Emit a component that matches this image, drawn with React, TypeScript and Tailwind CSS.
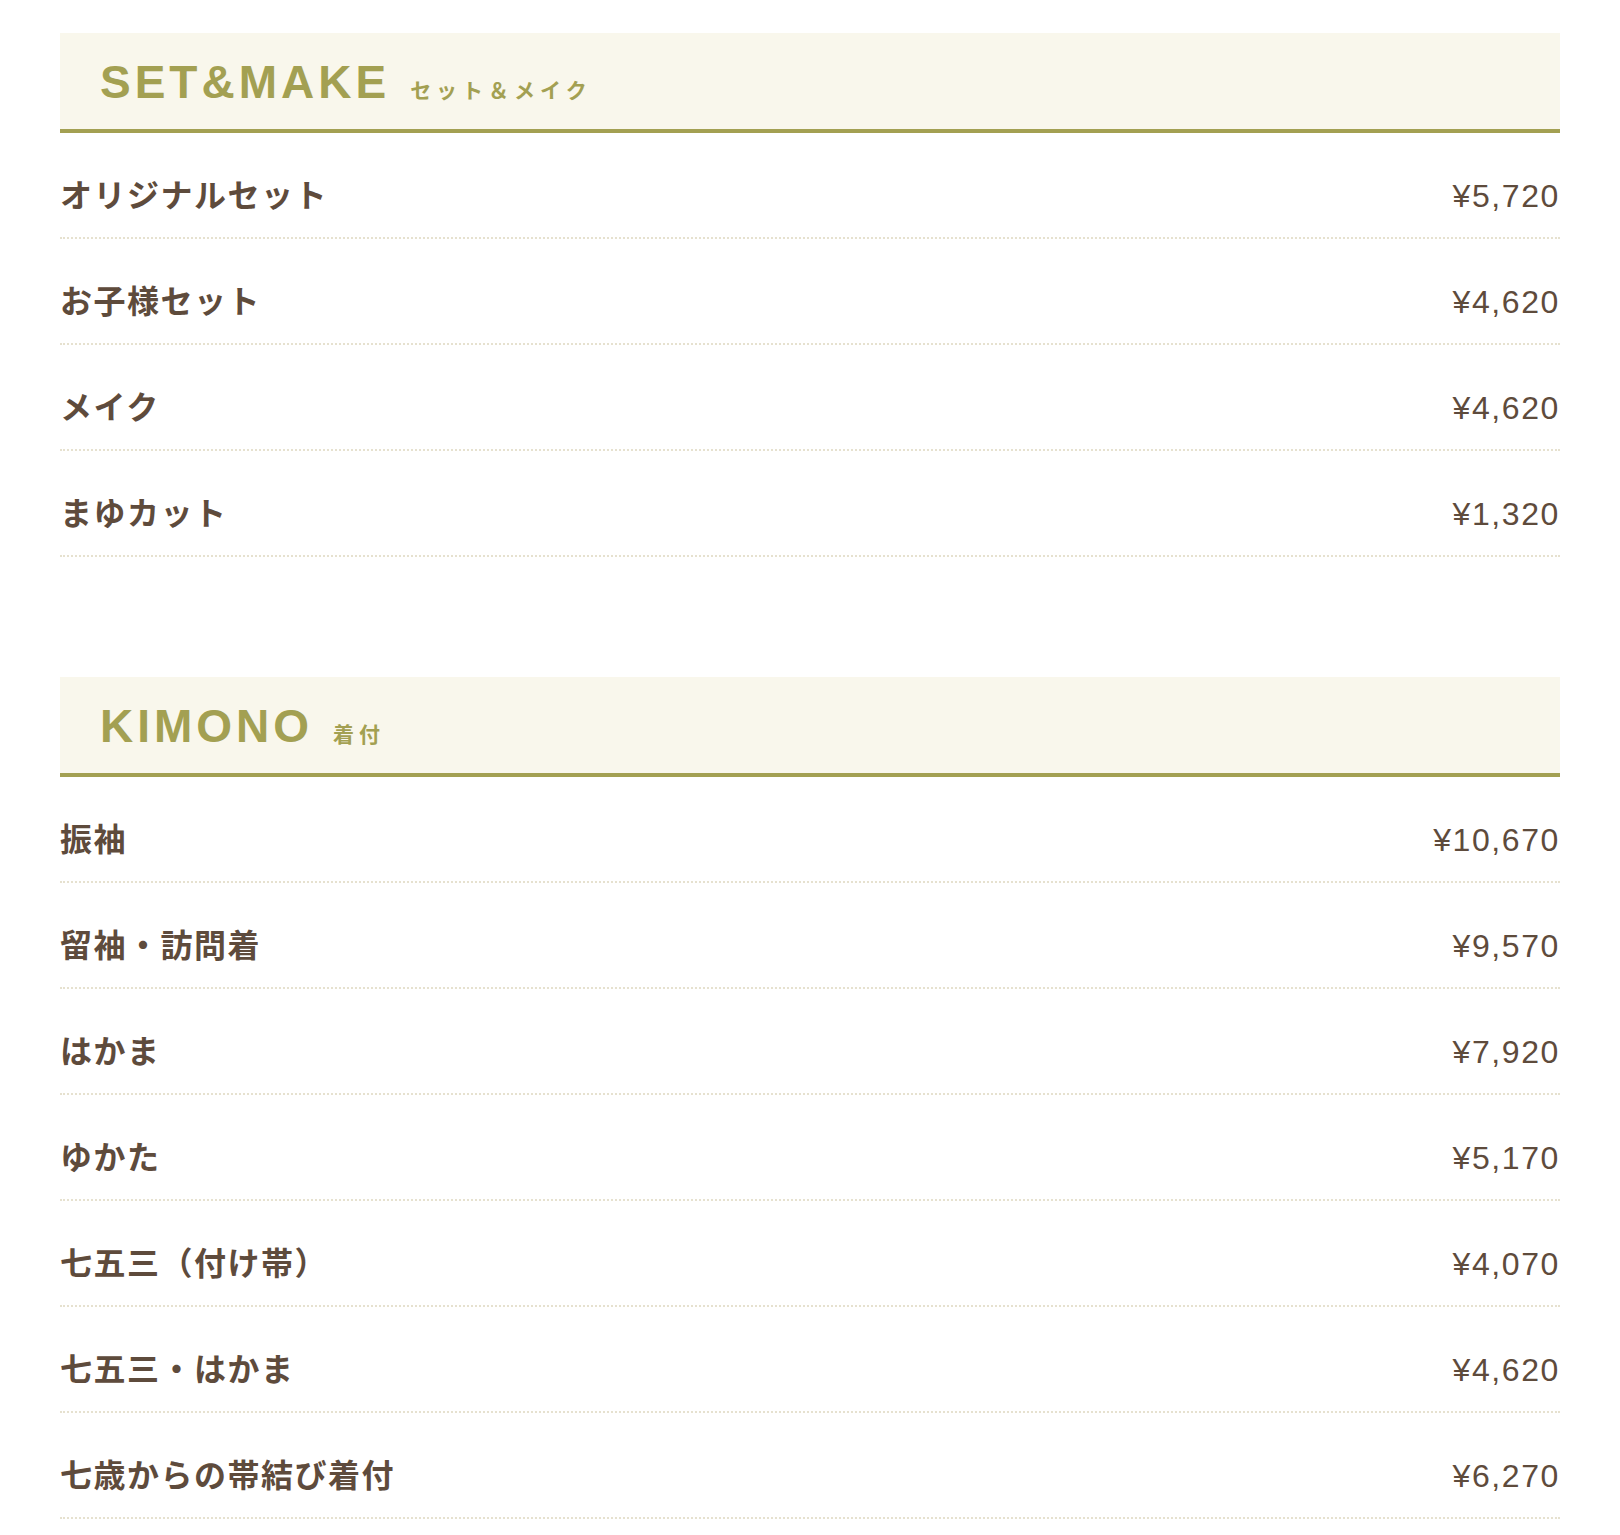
type MenuItem = { name: string; price: string };

type MenuSection = { en: string; ja: string; items: MenuItem[] };

const SECTIONS: MenuSection[] = [
  {
    en: 'SET&MAKE',
    ja: 'セット＆メイク',
    items: [
      { name: 'オリジナルセット', price: '¥5,720' },
      { name: 'お子様セット', price: '¥4,620' },
      { name: 'メイク', price: '¥4,620' },
      { name: 'まゆカット', price: '¥1,320' },
    ],
  },
  {
    en: 'KIMONO',
    ja: '着付',
    items: [
      { name: '振袖', price: '¥10,670' },
      { name: '留袖・訪問着', price: '¥9,570' },
      { name: 'はかま', price: '¥7,920' },
      { name: 'ゆかた', price: '¥5,170' },
      { name: '七五三（付け帯）', price: '¥4,070' },
      { name: '七五三・はかま', price: '¥4,620' },
      { name: '七歳からの帯結び着付', price: '¥6,270' },
    ],
  },
];

function SectionHeader({ en, ja }: { en: string; ja: string }) {
  return (
    <div className="h-[100px] bg-[#f9f7ec] border-b-4 border-[#a3a052] pl-[40px] pt-[26px]">
      <div className="flex items-baseline text-[#a3a052]">
        <h2 className="font-['Liberation_Sans',Arial,sans-serif] font-bold text-[46px] leading-[46px] tracking-[4px]">
          {en}
        </h2>
        <span className="ml-5 font-['Noto_Sans_CJK_JP',sans-serif] font-semibold text-[21px] leading-[21px] tracking-[5px]">
          {ja}
        </span>
      </div>
    </div>
  );
}

function PriceRow({ item }: { item: MenuItem }) {
  return (
    <li className="flex items-baseline justify-between pt-[36px] pb-[17px] border-b-2 border-dotted border-[#e6e1cf] text-[#5e4b3c]">
      <span className="font-['Noto_Sans_CJK_JP',sans-serif] font-bold text-[32px] leading-[48px] tracking-[1.5px]">
        {item.name}
      </span>
      <span className="font-['Liberation_Sans','Noto_Sans_CJK_JP',sans-serif] text-[32px] leading-[48px] tracking-[1.6px]">
        {item.price}
      </span>
    </li>
  );
}

export default function App() {
  return (
    <div className="min-h-[1535px] bg-white px-[60px] pt-[33px]">
      {SECTIONS.map((section, i) => (
        <section key={section.en} className={i > 0 ? 'mt-[120px]' : ''}>
          <SectionHeader en={section.en} ja={section.ja} />
          <ul>
            {section.items.map((item) => (
              <PriceRow key={item.name} item={item} />
            ))}
          </ul>
        </section>
      ))}
    </div>
  );
}
